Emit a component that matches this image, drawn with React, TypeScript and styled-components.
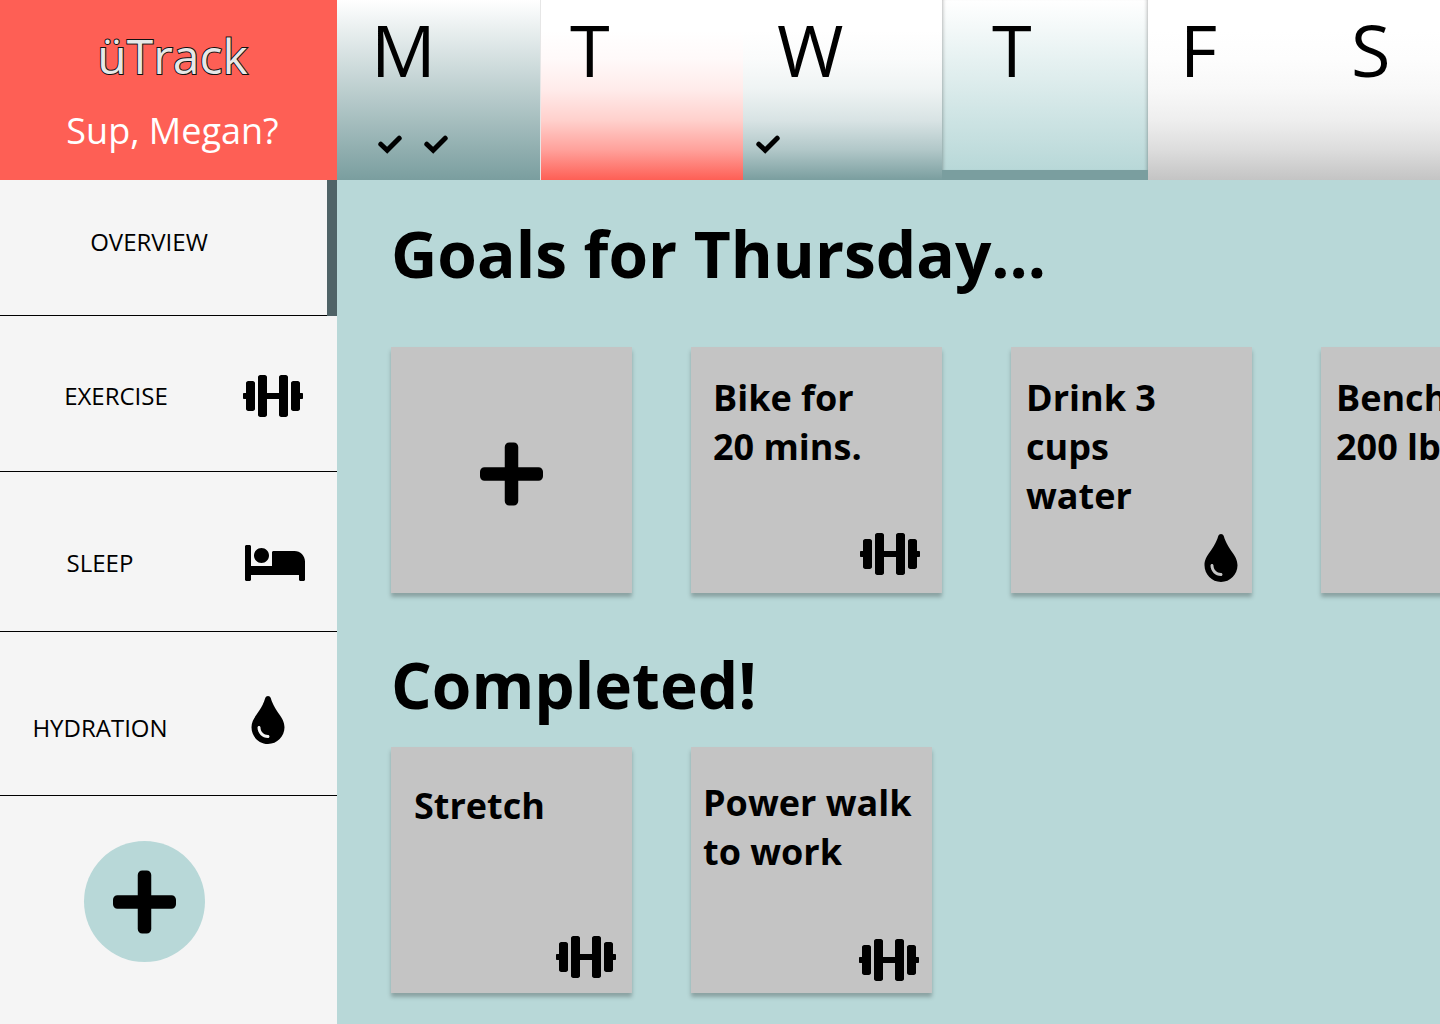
import React from "react";
import styled, { createGlobalStyle } from "styled-components";
import { FaBed, FaDumbbell, FaPlus, FaTint } from "react-icons/fa";

const GlobalStyle = createGlobalStyle`
  *, *::before, *::after { box-sizing: border-box; }
  body {
    margin: 0;
    background: #b8d8d8;
    color: #000;
    font-family: "Open Sans", "Noto Sans", sans-serif;
  }
  h1, h2, h3, p, ul { margin: 0; padding: 0; }
  ul { list-style: none; }
  button { font: inherit; color: inherit; border: 0; padding: 0; cursor: pointer; }
`;

const Page = styled.div`
  display: grid;
  grid-template-columns: 337px minmax(0, 1fr);
  min-height: 100vh;
  overflow: hidden;
`;

const Sidebar = styled.aside`
  background: #f5f5f5;
`;

const Brand = styled.header`
  height: 180px;
  padding: 23px 0 0 8px;
  background: #fe5f55;
  text-align: center;
`;

const Logo = styled.p`
  margin-bottom: 18px;
  font-size: 48px;
  line-height: 65px;
  color: #e6e8e8;
  -webkit-text-stroke: 2px #111;
  paint-order: stroke fill;
`;

const Greeting = styled.p`
  font-size: 36px;
  line-height: 49px;
  color: #fff;
`;

const NavLink = styled.a<{ $height: number; $pad: string; $align?: string; $active?: boolean }>`
  position: relative;
  display: flex;
  align-items: ${(p) => p.$align ?? "center"};
  justify-content: space-between;
  height: ${(p) => p.$height}px;
  padding: ${(p) => p.$pad};
  border-bottom: 1px solid #000;
  color: #000;
  font-size: 24px;
  line-height: 33px;
  text-decoration: none;

  &::after {
    content: "";
    display: ${(p) => (p.$active ? "block" : "none")};
    position: absolute;
    top: 0;
    right: 0;
    bottom: -1px;
    width: 10px;
    background: #4f6367;
  }
`;

const NavLabel = styled.span<{ $width: number }>`
  width: ${(p) => p.$width}px;
  text-align: center;
`;

const AddCategory = styled.button`
  display: flex;
  align-items: center;
  justify-content: center;
  width: 121px;
  height: 121px;
  margin: 45px 0 60px 84px;
  border-radius: 50%;
  background: #b8d8d8;
`;

const Week = styled.nav`
  display: grid;
  grid-template-columns: 203fr 203fr 199fr 206fr 171fr 121fr;
  height: 180px;
`;

const tones = {
  teal: "linear-gradient(#fff, #7a9e9f)",
  tealLate:
    "linear-gradient(#fff 17%, #fafbfb 33%, #eef3f3 50%, #d8e3e4 67%, #b2c8c9 83%, #7a9e9f)",
  red: "linear-gradient(#fff 17%, #fff9f9 33%, #ffebea 50%, #ffd0cc 67%, #ffa29c 83%, #fe5f55)",
  today: "linear-gradient(#fff, #b8d8d8)",
  grey: "linear-gradient(#fff 17%, #fdfdfd 33%, #f8f8f8 50%, #eee 67%, #ddd 83%, #c4c4c4)",
};

type Tone = keyof typeof tones;

const Day = styled.button<{ $tone: Tone; $inset: number }>`
  display: flex;
  flex-direction: column;
  justify-content: space-between;
  padding: 0 0 25px ${(p) => p.$inset}px;
  background: ${(p) => tones[p.$tone]};
  border-left: ${(p) => (p.$tone === "red" ? "1px solid #e6e6e6" : "0")};
  border-bottom: ${(p) => (p.$tone === "today" ? "10px solid #7a9e9f" : "0")};
  box-shadow: ${(p) =>
    p.$tone === "today"
      ? "inset 4px 0 4px -4px rgba(0, 0, 0, 0.4), inset -4px 0 4px -4px rgba(0, 0, 0, 0.4)"
      : "none"};
  font-size: 72px;
  line-height: 98px;
  text-align: left;
`;

const Checks = styled.span<{ $inset: number }>`
  display: flex;
  gap: 22px;
  margin-left: ${(p) => p.$inset}px;
`;

const Board = styled.main`
  padding: 30px 0 31px 54px;
`;

const Heading = styled.h1`
  font-size: 64px;
  line-height: 87px;
  font-weight: 700;
`;

const CardRow = styled.ul<{ $tracks: string; $top: number; $bottom: number }>`
  display: grid;
  grid-template-columns: ${(p) => p.$tracks};
  margin: ${(p) => p.$top}px 0 ${(p) => p.$bottom}px;
`;

const Card = styled.li<{ $wide?: boolean; $pad: string }>`
  display: flex;
  flex-direction: column;
  justify-content: space-between;
  width: ${(p) => (p.$wide ? 251 : 241)}px;
  height: 246px;
  padding: ${(p) => p.$pad};
  background: #c4c4c4;
  box-shadow: 0 4px 4px rgba(0, 0, 0, 0.25);

  svg { align-self: flex-end; }
`;

const CardTitle = styled.h3<{ $width?: number }>`
  width: ${(p) => p.$width ?? 170}px;
  font-size: 36px;
  line-height: 49px;
  font-weight: 700;
`;

const AddGoal = styled.button`
  display: flex;
  align-items: center;
  justify-content: center;
  width: 100%;
  height: 100%;
  padding-top: 8px;
  background: transparent;

  svg { align-self: center; }
`;

const Glyph = styled.span<{ $w: number; $h: number }>`
  display: contents;

  svg {
    flex: none;
    width: ${(p) => p.$w}px;
    height: ${(p) => p.$h}px;
  }
`;

const Dumbbell = () => <Glyph $w={60} $h={48}><FaDumbbell /></Glyph>;
const Bed = () => <Glyph $w={60} $h={48}><FaBed /></Glyph>;
const Drop = () => <Glyph $w={34} $h={48}><FaTint /></Glyph>;
const Plus = () => <Glyph $w={63} $h={72}><FaPlus /></Glyph>;

const Check = () => (
  <svg width="24" height="20" viewBox="0 0 24 20" fill="none" stroke="#000" strokeWidth="5" strokeLinecap="round">
    <path d="M2.8 9.2 9.2 15.2 21.2 3.2" />
  </svg>
);

const days: { letter: string; name: string; tone: Tone; inset: number; done?: number; checkInset?: number }[] = [
  { letter: "M", name: "Monday", tone: "teal", inset: 34, done: 2, checkInset: 7 },
  { letter: "T", name: "Tuesday", tone: "red", inset: 29 },
  { letter: "W", name: "Wednesday", tone: "tealLate", inset: 34, done: 1, checkInset: -21 },
  { letter: "T", name: "Thursday", tone: "today", inset: 50 },
  { letter: "F", name: "Friday", tone: "grey", inset: 32 },
  { letter: "S", name: "Saturday", tone: "grey", inset: 32 },
];

export default function App() {
  return (
    <>
      <GlobalStyle />
      <Page>
        <Sidebar>
          <Brand>
            <Logo>üTrack</Logo>
            <Greeting>Sup, Megan?</Greeting>
          </Brand>
          <nav aria-label="Categories">
            <NavLink href="#overview" $height={136} $pad="0 0 12px" $active>
              <NavLabel $width={298}>OVERVIEW</NavLabel>
            </NavLink>
            <NavLink href="#exercise" $height={156} $pad="4px 34px 0 0">
              <NavLabel $width={232}>EXERCISE</NavLabel>
              <Dumbbell />
            </NavLink>
            <NavLink href="#sleep" $height={160} $pad="22px 32px 0 0">
              <NavLabel $width={200}>SLEEP</NavLabel>
              <Bed />
            </NavLink>
            <NavLink href="#hydration" $height={164} $pad="0 52px 51px 0" $align="flex-end">
              <NavLabel $width={200}>HYDRATION</NavLabel>
              <Drop />
            </NavLink>
          </nav>
          <AddCategory type="button" aria-label="Add category">
            <Plus />
          </AddCategory>
        </Sidebar>

        <div>
          <Week aria-label="Days of the week">
            {days.map((d) => (
              <Day key={d.name} type="button" aria-label={d.name} $tone={d.tone} $inset={d.inset}>
                {d.letter}
                {d.done && (
                  <Checks $inset={d.checkInset ?? 0}>
                    {Array.from({ length: d.done }, (_, i) => <Check key={i} />)}
                  </Checks>
                )}
              </Day>
            ))}
          </Week>

          <Board>
            <Heading>Goals for Thursday...</Heading>
            <CardRow $tracks="300px 320px 310px 241px" $top={50} $bottom={48}>
              <Card $pad="0">
                <AddGoal type="button" aria-label="Add goal">
                  <Plus />
                </AddGoal>
              </Card>
              <Card $wide $pad="26px 22px 15px 22px">
                <CardTitle>Bike for 20 mins.</CardTitle>
                <Dumbbell />
              </Card>
              <Card $pad="26px 14px 11px 15px">
                <CardTitle>Drink 3 cups water</CardTitle>
                <Drop />
              </Card>
              <Card $pad="26px 14px 11px 15px">
                <CardTitle>Bench 200 lbs.</CardTitle>
                <Dumbbell />
              </Card>
            </CardRow>

            <Heading as="h2">Completed!</Heading>
            <CardRow $tracks="300px 241px" $top={19} $bottom={0}>
              <Card $pad="34px 16px 12px 23px">
                <CardTitle>Stretch</CardTitle>
                <Dumbbell />
              </Card>
              <Card $pad="31px 13px 9px 12px">
                <CardTitle $width={216}>Power walk to work</CardTitle>
                <Dumbbell />
              </Card>
            </CardRow>
          </Board>
        </div>
      </Page>
    </>
  );
}
